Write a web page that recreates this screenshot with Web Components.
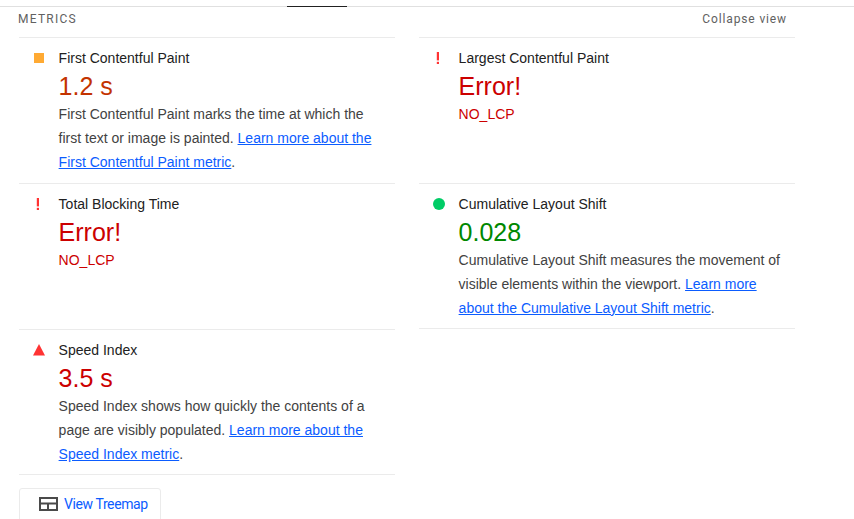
<!DOCTYPE html>
<html lang="en">
<head>
<meta charset="utf-8">
<title>Metrics</title>
<style>
html, body { margin: 0; height: 100%; overflow: hidden; background: #fff; }
body { font-family: "Liberation Sans", Arial, sans-serif; }
a { color: #0b5cff; }
</style>
</head>
<body>
<top-tabs></top-tabs>
<metrics-panel>
	<metric-row rating="average" name="First Contentful Paint" value="1.2 s">
		First Contentful Paint marks the time at which the first text or image is painted. <a href="#">Learn more about the First Contentful Paint metric</a>.
	</metric-row>
	<metric-row rating="error" name="Largest Contentful Paint" value="Error!" message="NO_LCP"></metric-row>
	<metric-row rating="error" name="Total Blocking Time" value="Error!" message="NO_LCP"></metric-row>
	<metric-row rating="pass" name="Cumulative Layout Shift" value="0.028" last style="height: 146.67px">
		Cumulative Layout Shift measures the movement of visible elements within the viewport. <a href="#">Learn more about the Cumulative Layout Shift metric</a>.
	</metric-row>
	<metric-row rating="fail" name="Speed Index" value="3.5 s" last>
		Speed Index shows how quickly the contents of a page are visibly populated. <a href="#">Learn more about the Speed Index metric</a>.
	</metric-row>
</metrics-panel>
<treemap-button>View Treemap</treemap-button>

<script>
class TopTabs extends HTMLElement {
	constructor() {
		super();
		this.attachShadow({mode: 'open'}).innerHTML = `<style>
			:host { display: block; height: 7px; box-sizing: border-box; padding-top: 6px; }
			.line { height: 1px; background: #e0e0e0; }
			.active { width: 60px; height: 1px; margin-left: 287px; background: #212121; }
		</style>
		<div class="line"><div class="active"></div></div>`;
	}
}

class MetricsPanel extends HTMLElement {
	constructor() {
		super();
		this.attachShadow({mode: 'open'}).innerHTML = `<style>
			:host { display: block; width: 776px; margin-left: 19px; }
			header {
				display: flex;
				justify-content: space-between;
				align-items: center;
				height: 30px;
				padding-bottom: 7px;
				box-sizing: border-box;
				font: 12px Roboto, "Liberation Sans", sans-serif;
				letter-spacing: 1.24px;
				color: #616161;
			}
			header span:first-child { margin-left: -1px; }
			header span:last-child { margin-right: 8px; letter-spacing: 0.87px; }
			.grid {
				display: grid;
				grid-template-columns: 376px 376px;
				column-gap: 24px;
				align-items: start;
			}
		</style>
		<header><span>METRICS</span><span>Collapse view</span></header>
		<div class="grid"><slot></slot></div>`;
	}
}

const ICONS = {
	average: `<svg width="10" height="10" viewBox="0 0 10 10"><rect width="10" height="10" fill="#ffaa33"/></svg>`,
	error: `<svg width="4" height="14" viewBox="0 0 4 14" style="margin-left: -2px"><rect x="0.8" y="1" width="2.2" height="8.4" fill="#ff3333"/><rect x="0.8" y="10.8" width="2.2" height="2.2" fill="#ff3333"/></svg>`,
	pass: `<svg width="12" height="12" viewBox="0 0 12 12"><circle cx="6" cy="6" r="6" fill="#00cc66"/></svg>`,
	fail: `<svg width="12" height="12" viewBox="0 0 12 12"><path d="M6 0 12 11.5H0Z" fill="#ff3333"/></svg>`
};
const VALUE_COLORS = { average: '#c33300', error: '#cc0000', pass: '#008800', fail: '#cc0000' };

class MetricRow extends HTMLElement {
	constructor() {
		super();
		const root = this.attachShadow({mode: 'open'});
		root.innerHTML = `<style>
			:host {
				display: block;
				box-sizing: border-box;
				height: 145.67px;
				border-top: 1px solid #ebebeb;
				font: 14px/24px "Liberation Sans", Arial, sans-serif;
			}
			:host([last]) { border-bottom: 1px solid #ebebeb; }
			.wrap { display: grid; grid-template-columns: 40px 1fr; padding: 8px 8px 0 0; }
			.icon { display: flex; align-items: center; justify-content: center; height: 24px; }
			.name, .value, .text, .message { margin-left: -0.4px; }
			.name { color: #212121; }
			.value { grid-column: 2; font-size: 25px; line-height: 32px; }
			.text { grid-column: 2; color: #424242; }
			.message { grid-column: 2; color: #cc0000; }
			::slotted(a) { color: #0b5cff; }
		</style>
		<div class="wrap">
			<div class="icon"></div>
			<div class="name"></div>
			<div class="value"></div>
			<div class="message"></div>
			<div class="text"><slot></slot></div>
		</div>`;
	}

	connectedCallback() {
		const rating = this.getAttribute('rating');
		const root = this.shadowRoot;
		root.querySelector('.icon').innerHTML = ICONS[rating];
		root.querySelector('.name').textContent = this.getAttribute('name');
		root.querySelector('.value').textContent = this.getAttribute('value');
		root.querySelector('.value').style.color = VALUE_COLORS[rating];
		const message = root.querySelector('.message');
		if (this.hasAttribute('message')) message.textContent = this.getAttribute('message');
		else message.remove();
	}
}

class TreemapButton extends HTMLElement {
	constructor() {
		super();
		this.attachShadow({mode: 'open'}).innerHTML = `<style>
			:host {
				display: flex;
				align-items: center;
				gap: 6px;
				box-sizing: border-box;
				width: 142px;
				height: 40px;
				margin: 13px 0 0 19px;
				padding: 0 0 8px 19px;
				border: 1px solid #ebebeb;
				border-radius: 3px;
				font: 14px Roboto, "Liberation Sans", sans-serif;
				letter-spacing: -0.4px;
				color: #0b5cff;
			}
			svg { flex: none; }
			span { padding-top: 1px; }
		</style>
		<svg width="19" height="14" viewBox="0 0 19 14" fill="none" stroke="#4a4a4a" stroke-width="2"><rect x="1" y="1" width="17" height="12"/><path d="M1 6.5H18M9 6.5V13"/></svg>
		<span><slot></slot></span>`;
	}
}

customElements.define('top-tabs', TopTabs);
customElements.define('metrics-panel', MetricsPanel);
customElements.define('metric-row', MetricRow);
customElements.define('treemap-button', TreemapButton);
</script>
</body>
</html>
